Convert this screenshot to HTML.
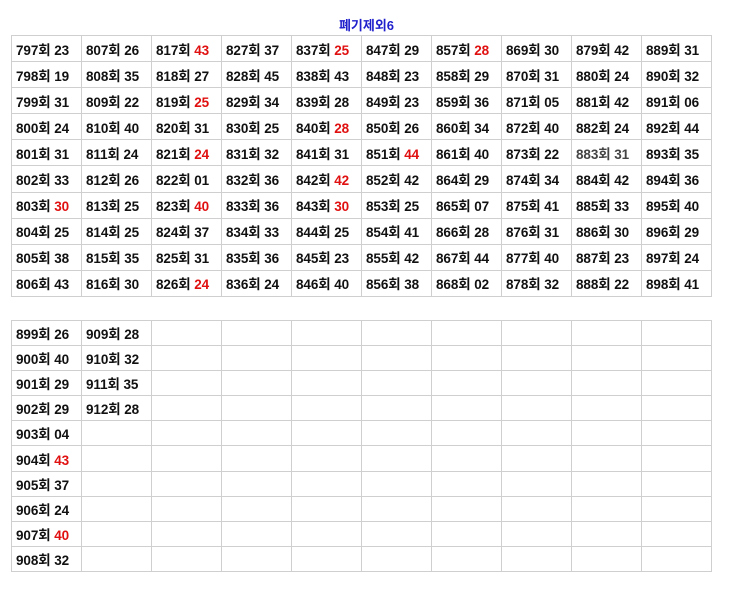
<!DOCTYPE html>
<html><head><meta charset="utf-8"><style>
body{margin:0;background:#fff;width:733px;height:590px;overflow:hidden;font-family:"Liberation Sans","Noto Sans CJK KR",sans-serif;}
.t{position:absolute;left:0;top:15px;width:733px;text-align:center;font-size:13px;font-weight:bold;color:#1f1fcc;}
table{position:absolute;left:11px;border-collapse:collapse;table-layout:fixed;width:701px;}
td{box-sizing:border-box;border:1px solid #cfcfcf;width:70px;padding:0 0 0 4px;font-size:13.5px;font-weight:bold;color:#111;white-space:nowrap;overflow:hidden;letter-spacing:-0.1px;}
.r{color:#e01010}.g{color:#444}
#a{top:35px;height:262px}
#b{top:320px;height:252px}
</style></head><body>
<div class="t">폐기제외6</div>
<table id="a">
<tr><td>797회 23</td><td>807회 26</td><td>817회 <span class="r">43</span></td><td>827회 37</td><td>837회 <span class="r">25</span></td><td>847회 29</td><td>857회 <span class="r">28</span></td><td>869회 30</td><td>879회 42</td><td>889회 31</td></tr>
<tr><td>798회 19</td><td>808회 35</td><td>818회 27</td><td>828회 45</td><td>838회 43</td><td>848회 23</td><td>858회 29</td><td>870회 31</td><td>880회 24</td><td>890회 32</td></tr>
<tr><td>799회 31</td><td>809회 22</td><td>819회 <span class="r">25</span></td><td>829회 34</td><td>839회 28</td><td>849회 23</td><td>859회 36</td><td>871회 05</td><td>881회 42</td><td>891회 06</td></tr>
<tr><td>800회 24</td><td>810회 40</td><td>820회 31</td><td>830회 25</td><td>840회 <span class="r">28</span></td><td>850회 26</td><td>860회 34</td><td>872회 40</td><td>882회 24</td><td>892회 44</td></tr>
<tr><td>801회 31</td><td>811회 24</td><td>821회 <span class="r">24</span></td><td>831회 32</td><td>841회 31</td><td>851회 <span class="r">44</span></td><td>861회 40</td><td>873회 22</td><td class="g">883회 31</td><td>893회 35</td></tr>
<tr><td>802회 33</td><td>812회 26</td><td>822회 01</td><td>832회 36</td><td>842회 <span class="r">42</span></td><td>852회 42</td><td>864회 29</td><td>874회 34</td><td>884회 42</td><td>894회 36</td></tr>
<tr><td>803회 <span class="r">30</span></td><td>813회 25</td><td>823회 <span class="r">40</span></td><td>833회 36</td><td>843회 <span class="r">30</span></td><td>853회 25</td><td>865회 07</td><td>875회 41</td><td>885회 33</td><td>895회 40</td></tr>
<tr><td>804회 25</td><td>814회 25</td><td>824회 37</td><td>834회 33</td><td>844회 25</td><td>854회 41</td><td>866회 28</td><td>876회 31</td><td>886회 30</td><td>896회 29</td></tr>
<tr><td>805회 38</td><td>815회 35</td><td>825회 31</td><td>835회 36</td><td>845회 23</td><td>855회 42</td><td>867회 44</td><td>877회 40</td><td>887회 23</td><td>897회 24</td></tr>
<tr><td>806회 43</td><td>816회 30</td><td>826회 <span class="r">24</span></td><td>836회 24</td><td>846회 40</td><td>856회 38</td><td>868회 02</td><td>878회 32</td><td>888회 22</td><td>898회 41</td></tr>
</table>
<table id="b">
<tr><td>899회 26</td><td>909회 28</td><td></td><td></td><td></td><td></td><td></td><td></td><td></td><td></td></tr>
<tr><td>900회 40</td><td>910회 32</td><td></td><td></td><td></td><td></td><td></td><td></td><td></td><td></td></tr>
<tr><td>901회 29</td><td>911회 35</td><td></td><td></td><td></td><td></td><td></td><td></td><td></td><td></td></tr>
<tr><td>902회 29</td><td>912회 28</td><td></td><td></td><td></td><td></td><td></td><td></td><td></td><td></td></tr>
<tr><td>903회 04</td><td></td><td></td><td></td><td></td><td></td><td></td><td></td><td></td><td></td></tr>
<tr><td>904회 <span class="r">43</span></td><td></td><td></td><td></td><td></td><td></td><td></td><td></td><td></td><td></td></tr>
<tr><td>905회 37</td><td></td><td></td><td></td><td></td><td></td><td></td><td></td><td></td><td></td></tr>
<tr><td>906회 24</td><td></td><td></td><td></td><td></td><td></td><td></td><td></td><td></td><td></td></tr>
<tr><td>907회 <span class="r">40</span></td><td></td><td></td><td></td><td></td><td></td><td></td><td></td><td></td><td></td></tr>
<tr><td>908회 32</td><td></td><td></td><td></td><td></td><td></td><td></td><td></td><td></td><td></td></tr>
</table>
</body></html>
